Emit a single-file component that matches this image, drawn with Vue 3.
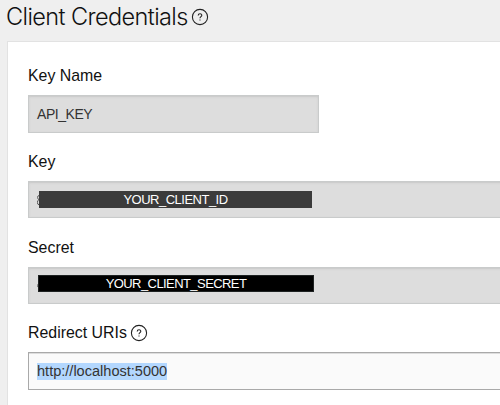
<script setup>
const fields = [
  { label: 'Key Name', value: 'API_KEY', kind: 'short' },
  { label: 'Key', mask: 'YOUR_CLIENT_ID', kind: 'id' },
  { label: 'Secret', mask: 'YOUR_CLIENT_SECRET', kind: 'secret' },
  { label: 'Redirect URIs', value: 'http://localhost:5000', kind: 'uri', help: true },
]
</script>

<template>
  <main class="page">
    <header class="heading">
      <h1>Client Credentials</h1>
      <svg class="help" viewBox="0 0 18 18">
        <circle cx="9" cy="9" r="7.6" />
        <path d="M7.2 7.4C7.3 5.2 10.8 5.2 10.8 7.3C10.8 8.7 9 8.7 9 10.3M9 11.5V12.6" />
      </svg>
    </header>
    <section class="card">
      <div v-for="f in fields" :key="f.label" class="field">
        <div class="label">
          <span>{{ f.label }}</span>
          <svg v-if="f.help" class="help" viewBox="0 0 18 18">
            <circle cx="9" cy="9" r="7.6" />
            <path d="M7.2 7.4C7.3 5.2 10.8 5.2 10.8 7.3C10.8 8.7 9 8.7 9 10.3M9 11.5V12.6" />
          </svg>
        </div>
        <div class="box" :class="f.kind">
          <template v-if="f.mask">
            <svg class="peek" viewBox="0 0 2 12">
              <path v-if="f.kind === 'id'" d="M2 1.5Q.6 1.6 .6 3.4T2 5.6Q.4 6.2 .4 8.4T2 10.8" />
              <path v-else d="M2 4.5Q.6 5 .6 7.3T2 10" />
            </svg>
            <span class="mask">{{ f.mask }}</span>
          </template>
          <span v-else class="value">{{ f.value }}</span>
        </div>
      </div>
    </section>
  </main>
</template>

<style>
body { background: #efefef; overflow: hidden; }
</style>

<style scoped>
* { box-sizing: border-box; }
.page {
  width: 500px;
  height: 405px;
  overflow: hidden;
  display: flex;
  flex-direction: column;
  background: #efefef;
  color: #111;
  font-family: "Liberation Sans", Arial, sans-serif;
}
.heading {
  flex: none;
  height: 41px;
  padding: 1px 0 0 6px;
  display: flex;
  align-items: flex-start;
  gap: 3px;
}
h1 {
  margin: 0;
  width: 182px;
  font: 300 23.5px/32px Inter, sans-serif;
  letter-spacing: -0.6px;
  white-space: nowrap;
}
.help {
  flex: none;
  width: 18px;
  height: 18px;
  fill: none;
  stroke: #222;
  stroke-width: 1.1;
}
.heading .help { margin-top: 7px; }
.card {
  flex: none;
  width: 520px;
  height: 380px;
  margin-left: 7px;
  padding: 22px 0 0 20px;
  border: 1px solid #e2e2e2;
  background: #fff;
}
.field { height: 85.8px; }
.label {
  height: 31px;
  padding-top: 1px;
  display: flex;
  align-items: flex-start;
  gap: 3px;
  font-size: 15.9px;
  line-height: 22px;
}
.label .help { margin-top: 2px; }
.box {
  display: flex;
  align-items: center;
  width: 500px;
  height: 37.5px;
  padding-left: 8px;
  border: 1px solid #c9cbcb;
  background: #ddd;
  box-shadow: inset 0 1px 2px #c8c8c8;
  color: #333;
  font-size: 14.55px;
}
.short { width: 291px; }
.short .value {
  font-size: 14px;
  letter-spacing: -0.45px;
}
.uri {
  border-color: #a9a9a9;
  background: #fafafa;
  box-shadow: inset 0 1px 0 #ddd;
}
.uri .value {
  height: 17px;
  line-height: 17px;
  background: #b3d7fe;
}
.peek {
  flex: none;
  width: 2px;
  height: 12px;
  fill: none;
  stroke: #555;
  stroke-width: 1;
}
.mask {
  width: 273px;
  height: 17px;
  background: #3b3b3b;
  color: #fff;
  text-align: center;
  font-size: 13px;
  letter-spacing: -0.5px;
  line-height: 17px;
}
.secret .peek {
  width: 1px;
  stroke: #111;
}
.secret .mask {
  width: 276px;
  margin-bottom: 3px;
  background: #000;
  border: 1px solid #1e2222;
  letter-spacing: -0.57px;
  line-height: 15px;
}
</style>
